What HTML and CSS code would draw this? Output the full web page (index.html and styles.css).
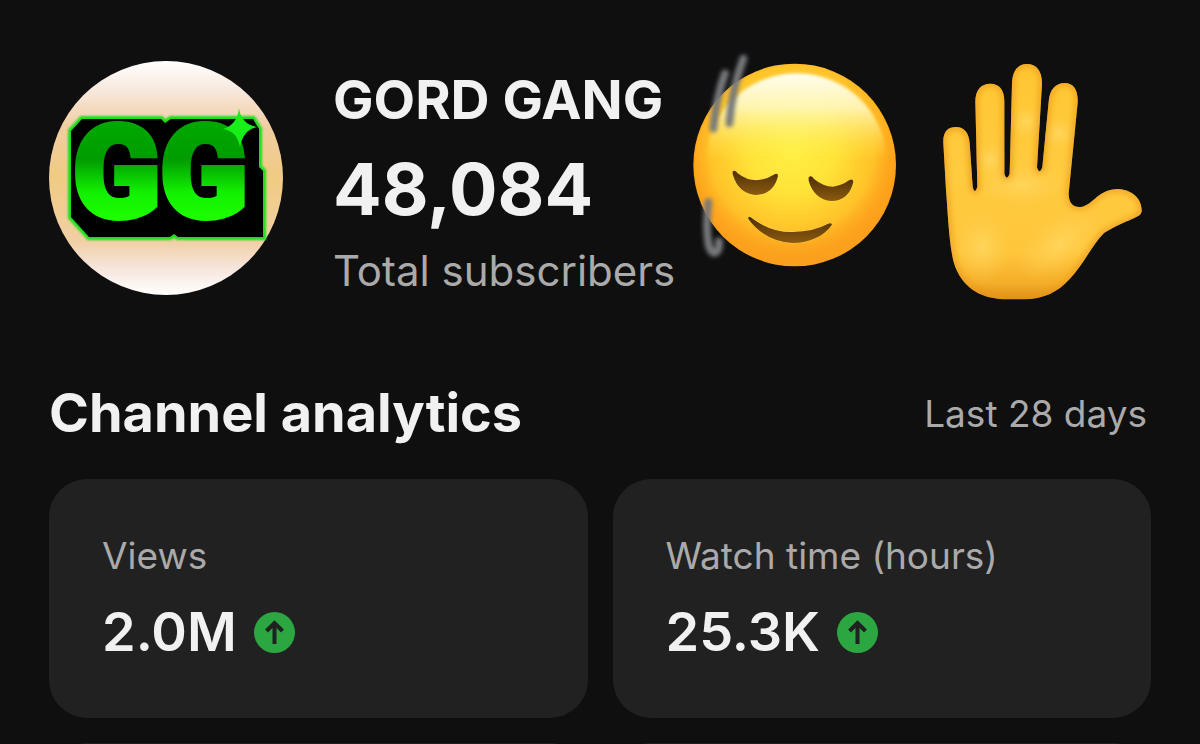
FILE: index.html
```
<!DOCTYPE html>
<html lang="en">
<head>
    <meta charset="UTF-8">
    <meta name="viewport" content="width=device-width, initial-scale=1.0">
    <title>Channel analytics</title>
    <link rel="stylesheet" href="styles.css">
</head>
<body>
    <header class="channel">
        <svg class="avatar" viewBox="0 0 234 234" role="img" aria-label="GG logo">
            <defs>
                <linearGradient id="avatarBg" x1="0" y1="0" x2="0" y2="1">
                    <stop offset="0" stop-color="#ffffff"/>
                    <stop offset="0.12" stop-color="#f8e9df"/>
                    <stop offset="0.28" stop-color="#f0cda2"/>
                    <stop offset="0.5" stop-color="#f0cb82"/>
                    <stop offset="0.77" stop-color="#f1cfa5"/>
                    <stop offset="0.88" stop-color="#f6e4da"/>
                    <stop offset="1" stop-color="#ffffff"/>
                </linearGradient>
                <linearGradient id="letterFill" gradientUnits="userSpaceOnUse" x1="0" y1="62" x2="0" y2="158">
                    <stop offset="0" stop-color="#00a800"/>
                    <stop offset="0.38" stop-color="#009c00"/>
                    <stop offset="0.72" stop-color="#12f000"/>
                    <stop offset="1" stop-color="#1cff00"/>
                </linearGradient>
                <filter id="glow" x="-10%" y="-10%" width="120%" height="120%">
                    <feGaussianBlur stdDeviation="1"/>
                </filter>
            </defs>
            <circle cx="117" cy="117" r="117" fill="url(#avatarBg)"/>
            <path class="plate-glow" filter="url(#glow)" d="M33 58H112L116 62L122 58H204L210 68V106L214 110V176H129L125 173L121 176H40L22 156V70Z"/>
            <path d="M33 58H112L116 62L122 58H204L210 68V106L214 110V176H129L125 173L121 176H40L22 156V70Z"/>
            <text class="avatar-text" x="24" y="156">GG</text>
            <path fill="#18ef18" d="M190 47Q192 63 208 66Q194 69 191 86Q188 70 174 68Q188 64 190 47Z"/>
        </svg>

        <div class="channel-info">
            <h1 class="channel-name">GORD GANG</h1>
            <p class="sub-count">48,084</p>
            <p class="sub-label">Total subscribers</p>
        </div>

        <div class="emojis">
            <svg class="emoji" viewBox="3 30 690 768" role="img" aria-label="Relieved face">
                <defs>
                    <linearGradient id="rim" x1="0" y1="0" x2="0" y2="1">
                        <stop offset="0" stop-color="#ffbf2b"/>
                        <stop offset="0.5" stop-color="#ff9f18"/>
                        <stop offset="1" stop-color="#fba01e"/>
                    </linearGradient>
                    <radialGradient id="face" gradientUnits="userSpaceOnUse" cx="335" cy="330" r="330">
                        <stop offset="0" stop-color="#fff044"/>
                        <stop offset="0.4" stop-color="#ffe238"/>
                        <stop offset="0.75" stop-color="#ffc62a" stop-opacity="0.9"/>
                        <stop offset="1" stop-color="#ffa51c" stop-opacity="0"/>
                    </radialGradient>
                    <linearGradient id="shine" x1="0" y1="0" x2="0" y2="1">
                        <stop offset="0" stop-color="#fffef0"/>
                        <stop offset="0.2" stop-color="#fffac4" stop-opacity="0.85"/>
                        <stop offset="0.5" stop-color="#fff04a" stop-opacity="0"/>
                    </linearGradient>
                    <linearGradient id="feature" x1="0" y1="0" x2="0" y2="1">
                        <stop offset="0" stop-color="#4e2f08"/>
                        <stop offset="1" stop-color="#8c5a10"/>
                    </linearGradient>
                    <filter id="edge">
                        <feGaussianBlur stdDeviation="4"/>
                    </filter>
                    <filter id="soft" x="-30%" y="-10%" width="160%" height="120%">
                        <feGaussianBlur stdDeviation="6"/>
                    </filter>
                </defs>
                <circle cx="344" cy="375" r="304" fill="url(#rim)"/>
                <circle cx="344" cy="375" r="300" fill="url(#face)"/>
                <ellipse cx="350" cy="360" rx="268" ry="260" fill="url(#shine)" filter="url(#edge)"/>
                <g class="face-lines">
                    <path d="M158 394Q166 388 173 400Q200 421 229 421Q258 419 281 404Q294 397 294 408Q280 464 226 465Q174 460 158 402Z"/>
                    <path d="M386 412Q395 404 402 417Q430 440 459 440Q485 437 507 421Q520 414 520 426Q507 482 454 483Q402 478 386 422Z"/>
                    <path d="M205 531Q211 528 220 538Q277 578 339 576Q400 575 443 552Q454 547 456 554Q418 607 336 609Q253 603 205 537Z"/>
                </g>
                <g class="streaks" filter="url(#soft)">
                    <path d="M135 100Q108 175 100 266"/>
                    <path d="M190 56Q156 145 148 250"/>
                    <path d="M85 486Q76 565 86 615Q94 646 110 636Q120 627 117 604"/>
                </g>
            </svg>

            <svg class="emoji" viewBox="-27 0 690 768" role="img" aria-label="Raised hand">
                <defs>
                    <linearGradient id="skin" x1="0" y1="0" x2="0" y2="1">
                        <stop offset="0" stop-color="#ffc632"/>
                        <stop offset="0.45" stop-color="#ffcb40"/>
                        <stop offset="0.8" stop-color="#ffc63c"/>
                        <stop offset="0.93" stop-color="#f5ae2a"/>
                        <stop offset="1" stop-color="#dd8f18"/>
                    </linearGradient>
                    <radialGradient id="pad">
                        <stop offset="0" stop-color="#ffd862" stop-opacity="0.8"/>
                        <stop offset="1" stop-color="#ffd052" stop-opacity="0"/>
                    </radialGradient>
                    <clipPath id="handShape">
                        <path id="hand" d="M40 280C38 245 54 231 78 231C103 231 117 249 119 280L128 410Q134 435 142 410L136 155C136 120 153 101 181 101C208 101 223 120 223 153L223 372Q230 394 239 372L246 100C248 60 265 42 291 42C320 42 337 64 336 102L321 352Q328 376 337 352L356 155C359 118 377 99 404 99C431 99 445 120 443 158L416 430C416 462 431 473 453 471C492 464 504 417 565 417C607 419 636 447 635 482C635 505 592 505 522 549C483 589 461 643 419 687C382 728 340 747 282 748H222C145 745 94 708 72 640C57 585 53 480 48 420Z"/>
                    </clipPath>
                    <filter id="shade">
                        <feGaussianBlur stdDeviation="9"/>
                    </filter>
                </defs>
                <use href="#hand" fill="url(#skin)"/>
                <g clip-path="url(#handShape)">
                    <ellipse cx="155" cy="590" rx="85" ry="110" fill="url(#pad)"/>
                    <ellipse cx="390" cy="580" rx="150" ry="80" fill="url(#pad)" transform="rotate(-38 390 580)"/>
                    <ellipse cx="275" cy="405" rx="130" ry="60" fill="url(#pad)"/>
                    <ellipse cx="181" cy="330" rx="60" ry="50" fill="url(#pad)"/>
                    <ellipse cx="289" cy="215" rx="60" ry="50" fill="url(#pad)"/>
                    <ellipse cx="385" cy="250" rx="60" ry="50" fill="url(#pad)"/>
                    <use class="hand-edge" href="#hand" filter="url(#shade)"/>
                </g>
            </svg>
        </div>
    </header>

    <main>
        <div class="section-head">
            <h2>Channel analytics</h2>
            <span class="period">Last 28 days</span>
        </div>

        <div class="cards">
            <section class="card">
                <h3 class="card-label">Views</h3>
                <p class="card-value">
                    2.0M
                    <svg class="trend" viewBox="0 0 41 41" role="img" aria-label="Up">
                        <circle cx="20.5" cy="20.5" r="20.5"/>
                        <path d="M20.5 32V11M12.5 19L20.5 11L28.5 19"/>
                    </svg>
                </p>
            </section>
            <section class="card">
                <h3 class="card-label">Watch time (hours)</h3>
                <p class="card-value">
                    25.3K
                    <svg class="trend" viewBox="0 0 41 41" role="img" aria-label="Up">
                        <circle cx="20.5" cy="20.5" r="20.5"/>
                        <path d="M20.5 32V11M12.5 19L20.5 11L28.5 19"/>
                    </svg>
                </p>
            </section>
            <!-- next row, mostly below the fold -->
            <section class="card"></section>
            <section class="card"></section>
        </div>
    </main>
</body>
</html>
```

FILE: styles.css
```
* {
    box-sizing: border-box;
}
body {
    font-family: Inter, "Liberation Sans", sans-serif;
    background-color: #0f0f0f;
    color: #f1f1f1;
    height: 100vh;
    margin: 0;
    padding: 50px 49px 0;
    overflow: hidden;
}
h1, h2, h3, p {
    margin: 0;
}

/* Channel header */
.channel {
    display: flex;
    align-items: center;
}
.avatar {
    flex: none;
    width: 234px;
    height: 234px;
    margin-right: 50px;
}
.avatar-text {
    font-family: Roboto, sans-serif;
    font-size: 128px;
    font-weight: 900;
    fill: url(#letterFill);
    stroke: url(#letterFill);
    stroke-width: 6px;
}
.plate-glow {
    fill: none;
    stroke: #14e014;
    stroke-width: 6px;
}
.channel-info {
    padding-top: 8px;
    white-space: nowrap;
}
.channel-name {
    font-size: 54px;
    font-weight: 700;
    line-height: 72px;
}
.sub-count {
    font-size: 72px;
    font-weight: 700;
    line-height: 106px;
}
.sub-label {
    color: #aaaaaa;
    font-size: 42px;
    line-height: 58px;
}
.emojis {
    display: flex;
    gap: 10px;
    margin-left: auto;
}
.emoji {
    width: 230px;
    height: 256px;
}
.face-lines {
    fill: url(#feature);
    stroke: #ffd84a;
    stroke-width: 3px;
    paint-order: stroke;
}
.streaks {
    fill: none;
    stroke: #77797c;
    stroke-width: 23px;
    stroke-linecap: round;
}
.hand-edge {
    fill: none;
    stroke: #e8951c;
    stroke-width: 12px;
}

/* Analytics */
.section-head {
    display: flex;
    justify-content: space-between;
    align-items: center;
    margin: 71px 4px 30px 0;
}
.section-head h2 {
    font-size: 54px;
    font-weight: 700;
    line-height: 72px;
}
.period {
    color: #aaaaaa;
    font-size: 37px;
}
.cards {
    display: grid;
    grid-template-columns: 1fr 1fr;
    gap: 25px;
}
.card {
    min-height: 239px;
    padding: 53px 53px 50px;
    border-radius: 38px;
    background-color: #212121;
}
.card-label {
    color: #aaaaaa;
    font-size: 37px;
    font-weight: 400;
    line-height: 48px;
    margin-bottom: 16px;
}
.card-value {
    display: flex;
    align-items: center;
    gap: 17px;
    font-size: 54px;
    font-weight: 600;
    line-height: 72px;
}
.trend {
    width: 41px;
    height: 41px;
}
.trend circle {
    fill: #2ba640;
}
.trend path {
    fill: none;
    stroke: #212121;
    stroke-width: 4px;
}
```
